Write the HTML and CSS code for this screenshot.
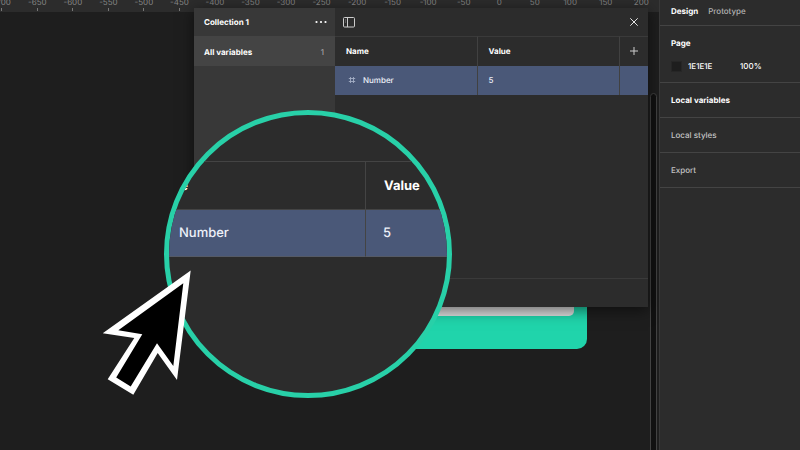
FILE: index.html
```html
<!DOCTYPE html>
<html lang="en">
<head>
    <meta charset="UTF-8">
    <meta name="viewport" content="width=device-width, initial-scale=1.0">
    <title>Local variables</title>
    <link rel="stylesheet" href="styles.css">
</head>
<body>
    <div class="editor">
        <main class="canvas">
            <div class="ruler">
                <span>-700</span><span>-650</span><span>-600</span><span>-550</span><span>-500</span>
                <span>-450</span><span>-400</span><span>-350</span><span>-300</span><span>-250</span>
                <span>-200</span><span>-150</span><span>-100</span><span>-50</span><span>0</span>
                <span>50</span><span>100</span><span>150</span><span>200</span>
            </div>

            <div class="frame">
                <div class="frame-card"></div>
            </div>

            <div class="scrollbar"></div>

            <section class="dialog" aria-label="Local variables">
                <nav class="collections">
                    <div class="collection-header">
                        <h2>Collection 1</h2>
                        <button class="icon-button" aria-label="Collection options">
                            <svg width="12" height="4" viewBox="0 0 12 4" fill="#fff">
                                <circle cx="1.5" cy="2" r="1.1"/><circle cx="6" cy="2" r="1.1"/><circle cx="10.5" cy="2" r="1.1"/>
                            </svg>
                        </button>
                    </div>
                    <button class="group">All variables <span class="count">1</span></button>
                </nav>

                <div class="variables">
                    <div class="toolbar">
                        <button class="icon-button" aria-label="Toggle sidebar">
                            <svg width="12" height="11" viewBox="0 0 12 11" fill="none" stroke="#ccc">
                                <rect x="0.5" y="0.5" width="11" height="9.5" rx="1"/><path d="M4.5 0.5V10"/><path d="M2 3H3M2 5H3" stroke="#888"/>
                            </svg>
                        </button>
                        <button class="icon-button" aria-label="Close">
                            <svg width="8" height="8" viewBox="0 0 8 8" stroke="#e5e5e5" stroke-width="1"><path d="M0.3 0.3L7.7 7.7M7.7 0.3L0.3 7.7"/></svg>
                        </button>
                    </div>
                    <table class="variable-table">
                        <thead>
                            <tr>
                                <th>Name</th>
                                <th>Value</th>
                                <th class="add-cell">
                                    <button class="icon-button" aria-label="Add mode">
                                        <svg width="8" height="8" viewBox="0 0 8 8" stroke="#ccc" stroke-width="1"><path d="M4 0V8M0 4H8"/></svg>
                                    </button>
                                </th>
                            </tr>
                        </thead>
                        <tbody>
                            <tr>
                                <td>
                                    <span class="variable-name">
                                        <svg width="8" height="8" viewBox="0 0 8 8" stroke="#a3adc4" stroke-width="0.9"><path d="M2.5 1V7M5.5 1V7M0.8 2.5H7.2M0.8 5.5H7.2"/></svg>
                                        Number
                                    </span>
                                </td>
                                <td>5</td>
                                <td></td>
                            </tr>
                        </tbody>
                    </table>
                    <div class="dialog-footer"></div>
                </div>
            </section>

            <div class="lens">
                <table class="lens-table">
                    <thead>
                        <tr><th>Name</th><th>Value</th></tr>
                    </thead>
                    <tbody>
                        <tr><td class="lens-name">Number</td><td>5</td></tr>
                    </tbody>
                </table>
            </div>

            <svg class="cursor" width="90" height="126" viewBox="102 270 90 126">
                <polygon fill="#fff" points="190.7,270.5 102.7,333.3 134.3,338 107.7,379.3 133.3,394.7 157.7,353 177,380"/>
                <polygon fill="#000" points="183.3,283.3 118.3,330.3 142.3,334.3 116.2,377.5 130.7,386.5 157,343.3 173.3,366"/>
            </svg>
        </main>

        <aside class="inspector">
            <div class="tabs">
                <button class="tab active">Design</button>
                <button class="tab">Prototype</button>
            </div>
            <section class="panel">
                <h3>Page</h3>
                <div class="fill-row">
                    <span class="swatch"></span>
                    <input class="hex" type="text" value="1E1E1E" aria-label="Page color">
                    <input class="opacity" type="text" value="100%" aria-label="Opacity">
                </div>
            </section>
            <button class="panel-row strong">Local variables</button>
            <button class="panel-row">Local styles</button>
            <button class="panel-row">Export</button>
        </aside>
    </div>
</body>
</html>
```

FILE: styles.css
```css
* {
    box-sizing: border-box;
}

body {
    margin: 0;
    background-color: #1e1e1e;
    color: #fff;
    font-family: Inter, "Liberation Sans", sans-serif;
    font-size: 8px;
    font-weight: 500;
    line-height: 12px;
    text-rendering: geometricPrecision;
}

button,
input {
    background: none;
    border: none;
    padding: 0;
    margin: 0;
    color: inherit;
    font: inherit;
    text-align: left;
    text-rendering: inherit;
}

h2,
h3 {
    margin: 0;
    font-size: 8px;
    font-weight: 700;
}

svg {
    display: block;
}

.editor {
    display: flex;
    min-height: 100vh;
}

.canvas {
    position: relative;
    flex: 1;
    min-width: 0;
    overflow: hidden;
}

/* Ruler */
.ruler {
    display: flex;
    height: 12px;
    margin-left: -16px;
    background-color: #2c2c2c;
    color: #858585;
    font-weight: 400;
    line-height: 5px;
}

.ruler span {
    display: flex;
    flex: 1 1 0;
    flex-direction: column;
    align-items: center;
    justify-content: space-between;
    padding-bottom: 1px;
}

.ruler span::after {
    content: "";
    width: 1px;
    height: 3px;
    background-color: #777;
}

/* Selected frame below the dialog */
.frame {
    position: absolute;
    left: 240px;
    top: 160px;
    width: 347px;
    height: 189px;
    padding: 13px;
    background-color: #20d4ab;
    border-radius: 10px;
}

.frame-card {
    height: 143px;
    background-color: #dcdcdc;
    border-radius: 5px;
}

.scrollbar {
    position: absolute;
    top: 93px;
    right: 2px;
    bottom: -8px;
    width: 7px;
    background-color: #111;
    border: 1px solid #424242;
    border-radius: 4px;
}

/* Variables dialog */
.dialog {
    position: absolute;
    left: 194px;
    top: 8px;
    display: flex;
    width: 454px;
    height: 299px;
    background-color: #2c2c2c;
    box-shadow: 0 3px 14px rgba(0, 0, 0, 0.55);
}

.collections {
    width: 141px;
    background-color: #383838;
}

.collection-header,
.toolbar {
    display: flex;
    align-items: center;
    justify-content: space-between;
    height: 28px;
}

.collection-header {
    padding: 0 8px 0 10px;
}

.group {
    display: flex;
    justify-content: space-between;
    align-items: center;
    width: 100%;
    height: 30px;
    padding: 1px 11px 0 10px;
    background-color: #444;
    font-weight: 700;
}

.count {
    color: #b3b3b3;
    font-weight: 400;
}

.variables {
    display: flex;
    flex: 1;
    flex-direction: column;
}

.toolbar {
    padding: 0 10px 0 8px;
}

.variable-table,
.lens-table {
    border-collapse: separate;
    border-spacing: 0;
    table-layout: fixed;
    text-align: left;
}

.variable-table {
    width: 100%;
}

.variable-table th,
.variable-table td {
    height: 29px;
    padding: 0 11px 1px;
    border-right: 1px solid #414141;
}

.variable-table th {
    height: 30px;
    border-top: 1px solid #3a3a3a;
    font-weight: 700;
}

.variable-table th:last-child,
.variable-table td:last-child {
    border-right: none;
}

.variable-table .add-cell {
    width: 28px;
    padding: 0 10px;
}

.variable-table td,
.lens-table td {
    background-color: #4a5878;
    color: #edf0f8;
}

.variable-name {
    display: flex;
    align-items: center;
    gap: 7px;
    padding-left: 2px;
}

.dialog-footer {
    height: 29px;
    margin-top: auto;
    border-top: 1px solid #3a3a3a;
}

/* Magnifier */
.lens {
    position: absolute;
    left: 164px;
    top: 110px;
    width: 288px;
    height: 288px;
    padding-top: 46px;
    overflow: hidden;
    background-color: #2c2c2c;
    border: 5px solid #28d0a8;
    border-radius: 50%;
}

.lens-table {
    width: 320px;
    margin-left: -36px;
    font-size: 13px;
    line-height: 16px;
}

.lens-table th,
.lens-table td {
    height: 48px;
    padding: 0 17px;
    border-top: 1px solid #444;
}

.lens-table th {
    padding: 0 18px;
    font-weight: 700;
}

.lens-table th:first-child {
    width: 233px;
}

.lens-table th:first-child,
.lens-table td:first-child {
    border-right: 1px solid #444;
}

.lens-table td {
    border-bottom: 1px solid #555a66;
}

.lens-table .lens-name {
    padding-left: 46px;
}

.cursor {
    position: absolute;
    left: 102px;
    top: 270px;
}

/* Right sidebar */
.inspector {
    width: 141px;
    background-color: #2c2c2c;
    border-left: 1px solid #383838;
}

.tabs {
    display: flex;
    gap: 10px;
    height: 26px;
    padding: 0 11px 4px;
    border-bottom: 1px solid #444;
}

.tab {
    color: #b3b3b3;
}

.tab.active {
    color: #fff;
    font-weight: 700;
}

.panel {
    padding: 11px 11px 10px;
    border-bottom: 1px solid #444;
}

.fill-row {
    display: flex;
    align-items: center;
    margin-top: 11px;
}

.swatch {
    width: 11px;
    height: 11px;
    margin-right: 6px;
    background-color: #1e1e1e;
    border: 1px solid #262626;
}

.hex {
    width: 52px;
}

.opacity {
    width: 28px;
}

.panel-row {
    display: block;
    width: 100%;
    height: 35px;
    padding: 0 11px;
    border-bottom: 1px solid #444;
    color: #c4c4c4;
}

.panel-row.strong {
    color: #fff;
    font-weight: 700;
}
```
